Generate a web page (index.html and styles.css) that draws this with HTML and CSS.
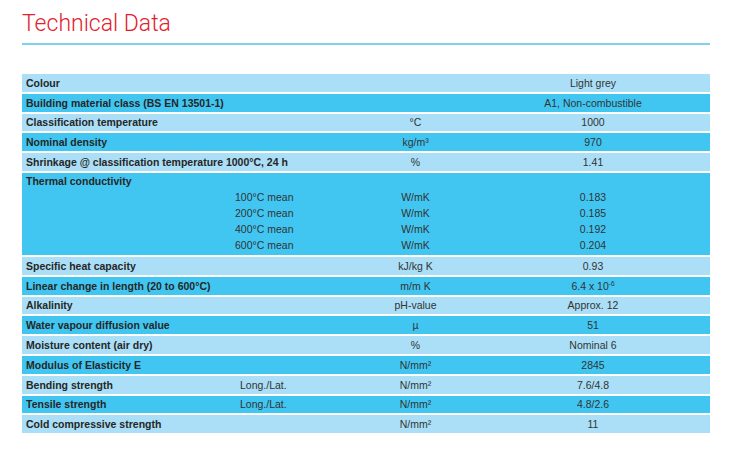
FILE: index.html
```html
<!DOCTYPE html>
<html>
<head>
<meta charset="utf-8">
<link rel="stylesheet" href="styles.css">
</head>
<body>
<div class="page">
  <h1 class="title">Technical Data</h1>
  <div class="table">
    <div class="row light"><div class="label wide">Colour</div><div class="unit"></div><div class="value">Light grey</div></div>
    <div class="row dark"><div class="label wide">Building material class (BS EN 13501-1)</div><div class="unit"></div><div class="value">A1, Non-combustible</div></div>
    <div class="row light"><div class="label wide">Classification temperature</div><div class="unit">°C</div><div class="value">1000</div></div>
    <div class="row dark"><div class="label wide">Nominal density</div><div class="unit">kg/m³</div><div class="value">970</div></div>
    <div class="row light"><div class="label wide">Shrinkage @ classification temperature 1000°C, 24 h</div><div class="unit">%</div><div class="value">1.41</div></div>
    <div class="row dark thermal">
      <div class="label wide tlabel">Thermal conductivity</div><div class="unit"></div><div class="value"></div>
      <div class="label"></div><div class="sub">100°C mean</div><div class="unit">W/mK</div><div class="value">0.183</div>
      <div class="label"></div><div class="sub">200°C mean</div><div class="unit">W/mK</div><div class="value">0.185</div>
      <div class="label"></div><div class="sub">400°C mean</div><div class="unit">W/mK</div><div class="value">0.192</div>
      <div class="label"></div><div class="sub">600°C mean</div><div class="unit">W/mK</div><div class="value">0.204</div>
    </div>
    <div class="row light"><div class="label wide">Specific heat capacity</div><div class="unit">kJ/kg K</div><div class="value">0.93</div></div>
    <div class="row dark"><div class="label wide">Linear change in length (20 to 600°C)</div><div class="unit">m/m K</div><div class="value">6.4 x 10<sup class="exp">-6</sup></div></div>
    <div class="row light"><div class="label wide">Alkalinity</div><div class="unit">pH-value</div><div class="value">Approx. 12</div></div>
    <div class="row dark"><div class="label wide">Water vapour diffusion value</div><div class="unit">µ</div><div class="value">51</div></div>
    <div class="row light"><div class="label wide">Moisture content (air dry)</div><div class="unit">%</div><div class="value">Nominal 6</div></div>
    <div class="row dark"><div class="label wide">Modulus of Elasticity E</div><div class="unit">N/mm²</div><div class="value">2845</div></div>
    <div class="row light"><div class="label">Bending strength</div><div class="sub shifted">Long./Lat.</div><div class="unit">N/mm²</div><div class="value">7.6/4.8</div></div>
    <div class="row dark"><div class="label">Tensile strength</div><div class="sub shifted">Long./Lat.</div><div class="unit">N/mm²</div><div class="value">4.8/2.6</div></div>
    <div class="row light"><div class="label wide">Cold compressive strength</div><div class="unit">N/mm²</div><div class="value">11</div></div>
  </div>
</div>
</body>
</html>
```

FILE: styles.css
```css
html, body {
  margin: 0;
  padding: 0;
  background: #ffffff;
}

.page {
  width: 688px;
  padding: 10px 0 0 22px;
}

.title {
  margin: 0;
  font-family: Roboto, "Liberation Sans", sans-serif;
  font-weight: 300;
  font-size: 23px;
  line-height: 27px;
  color: #e4202c;
  letter-spacing: 0;
  padding-bottom: 6px;
  border-bottom: 2px solid #7fd3f1;
}

.table {
  margin-top: 29px;
  display: flex;
  flex-direction: column;
  gap: 2px;
  font-family: "Liberation Sans", Arial, sans-serif;
  font-size: 10.5px;
  color: #333333;
}

.row {
  display: grid;
  grid-template-columns: 213px 120px 121px 1fr;
  height: 17.8px;
  align-items: center;
}

.light {
  background: #aadff7;
}

.dark {
  background: #41c6f2;
}

.label {
  padding-left: 4px;
  font-weight: bold;
  color: #262626;
  white-space: nowrap;
}

.wide {
  grid-column: span 2;
}

.sub {
  white-space: nowrap;
}

.shifted {
  padding-left: 5px;
}

.unit {
  text-align: center;
  white-space: nowrap;
}

.value {
  text-align: center;
  white-space: nowrap;
}

.thermal {
  height: auto;
  grid-auto-rows: 16px;
  padding: 0 0 2px 0;
}

.tlabel {
  padding-top: 0;
}

.exp {
  font-size: 6.5px;
  vertical-align: 4px;
  line-height: 0;
}
```
